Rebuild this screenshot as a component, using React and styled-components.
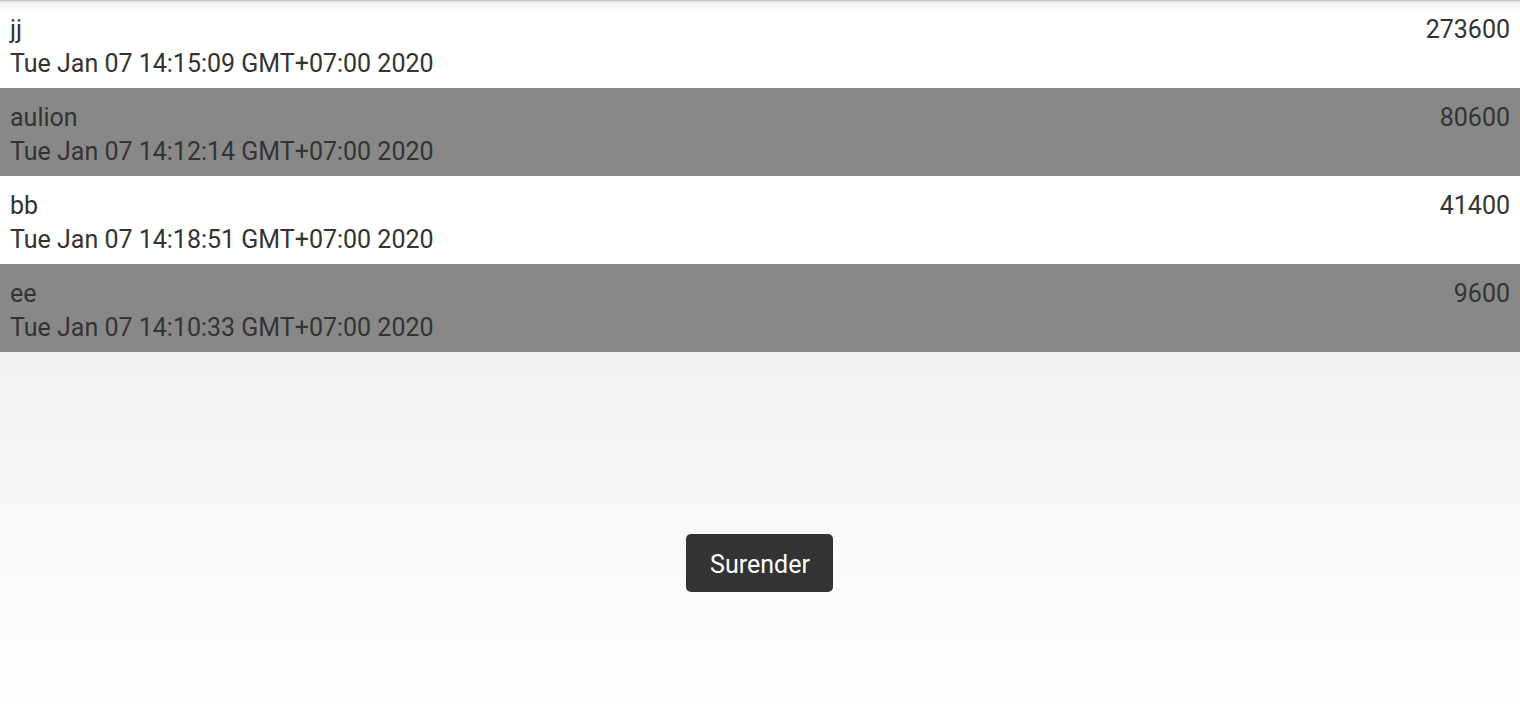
import React from 'react';
import styled, { createGlobalStyle } from 'styled-components';

const GlobalStyle = createGlobalStyle`
  html, body {
    margin: 0;
    padding: 0;
  }
  body {
    font-family: Roboto, "Liberation Sans", sans-serif;
    color: #333;
    background: #fff;
  }
`;

const Page = styled.div`
  position: relative;
  width: 100%;
  height: 720px;
  display: flex;
  flex-direction: column;
  background: linear-gradient(to bottom, #ececec 0px, #f3f3f3 352px, #ffffff 720px);
  overflow: hidden;

  &::before {
    content: '';
    position: absolute;
    top: 0;
    left: 0;
    right: 0;
    height: 12px;
    background: linear-gradient(to bottom, rgba(0, 0, 0, 0.28) 0px, rgba(0, 0, 0, 0.06) 2px, rgba(0, 0, 0, 0) 12px);
    pointer-events: none;
    z-index: 2;
  }
`;

const ScoreList = styled.ul`
  list-style: none;
  margin: 0;
  padding: 0;
`;

const ScoreRow = styled.li`
  height: 88px;
  box-sizing: border-box;
  padding: 13px 10px 0;
  background: ${({ $alt }) => ($alt ? '#888888' : '#ffffff')};
  display: grid;
  grid-template-columns: 1fr auto;
  grid-template-rows: 34px 34px;
  font-size: 25px;
  line-height: 34px;
  color: #333;
`;

const Name = styled.div`
  grid-column: 1;
  grid-row: 1;
`;

const Score = styled.div`
  grid-column: 2;
  grid-row: 1;
  text-align: right;
`;

const Stamp = styled.div`
  grid-column: 1 / span 2;
  grid-row: 2;
`;

const Footer = styled.div`
  flex: 1;
  display: flex;
  justify-content: center;
  align-items: flex-start;
  padding-top: 182px;
`;

const SurrenderButton = styled.button`
  width: 147px;
  height: 58px;
  margin-left: -2px;
  border: none;
  border-radius: 5px;
  background: #333333;
  color: #ffffff;
  font-family: Roboto, "Liberation Sans", sans-serif;
  font-size: 25px;
  cursor: pointer;
  padding: 3px 0 0 2px;
`;

const scores = [
  { name: 'jj', score: 273600, date: 'Tue Jan 07 14:15:09 GMT+07:00 2020' },
  { name: 'aulion', score: 80600, date: 'Tue Jan 07 14:12:14 GMT+07:00 2020' },
  { name: 'bb', score: 41400, date: 'Tue Jan 07 14:18:51 GMT+07:00 2020' },
  { name: 'ee', score: 9600, date: 'Tue Jan 07 14:10:33 GMT+07:00 2020' },
];

export default function App() {
  return (
    <>
      <GlobalStyle />
      <Page>
        <ScoreList>
          {scores.map((s, i) => (
            <ScoreRow key={s.name} $alt={i % 2 === 1}>
              <Name>{s.name}</Name>
              <Score>{s.score}</Score>
              <Stamp>{s.date}</Stamp>
            </ScoreRow>
          ))}
        </ScoreList>
        <Footer>
          <SurrenderButton>Surender</SurrenderButton>
        </Footer>
      </Page>
    </>
  );
}
